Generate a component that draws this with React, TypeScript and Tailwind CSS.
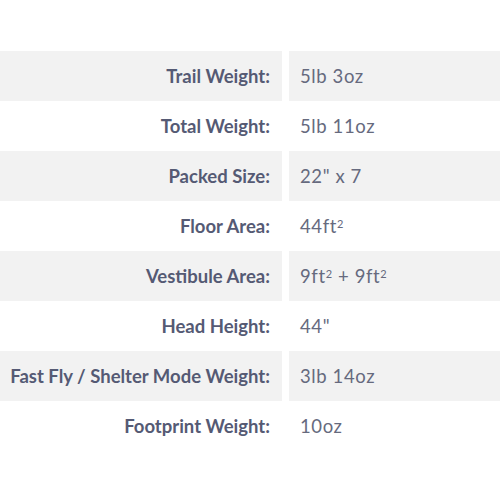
const specs: { label: string; value: React.ReactNode }[] = [
  { label: "Trail Weight:", value: "5lb 3oz" },
  { label: "Total Weight:", value: "5lb 11oz" },
  { label: "Packed Size:", value: '22" x 7' },
  {
    label: "Floor Area:",
    value: (
      <>
        44ft<sup className="text-[11px]">2</sup>
      </>
    ),
  },
  {
    label: "Vestibule Area:",
    value: (
      <>
        9ft<sup className="text-[11px]">2</sup> + 9ft<sup className="text-[11px]">2</sup>
      </>
    ),
  },
  { label: "Head Height:", value: '44"' },
  { label: "Fast Fly / Shelter Mode Weight:", value: "3lb 14oz" },
  { label: "Footprint Weight:", value: "10oz" },
];

export default function App() {
  return (
    <div className="h-[500px] w-[500px] bg-white pt-[51px] font-['Lato','Liberation_Sans',sans-serif]">
      {specs.map((row, index) => (
        <div key={row.label} className="grid h-[50px] grid-cols-[282px_1fr] gap-[7px]">
          <div
            className={`flex items-center justify-end pt-[2px] pr-[12px] text-[18.5px] font-bold text-[#555a74] ${
              index % 2 === 0 ? "bg-[#f2f2f2]" : ""
            }`}
          >
            {row.label}
          </div>
          <div
            className={`flex items-center pt-[2px] pl-[11px] text-[18.5px] tracking-[0.6px] text-[#666a7e] ${
              index % 2 === 0 ? "bg-[#f2f2f2]" : ""
            }`}
          >
            <span>{row.value}</span>
          </div>
        </div>
      ))}
    </div>
  );
}
